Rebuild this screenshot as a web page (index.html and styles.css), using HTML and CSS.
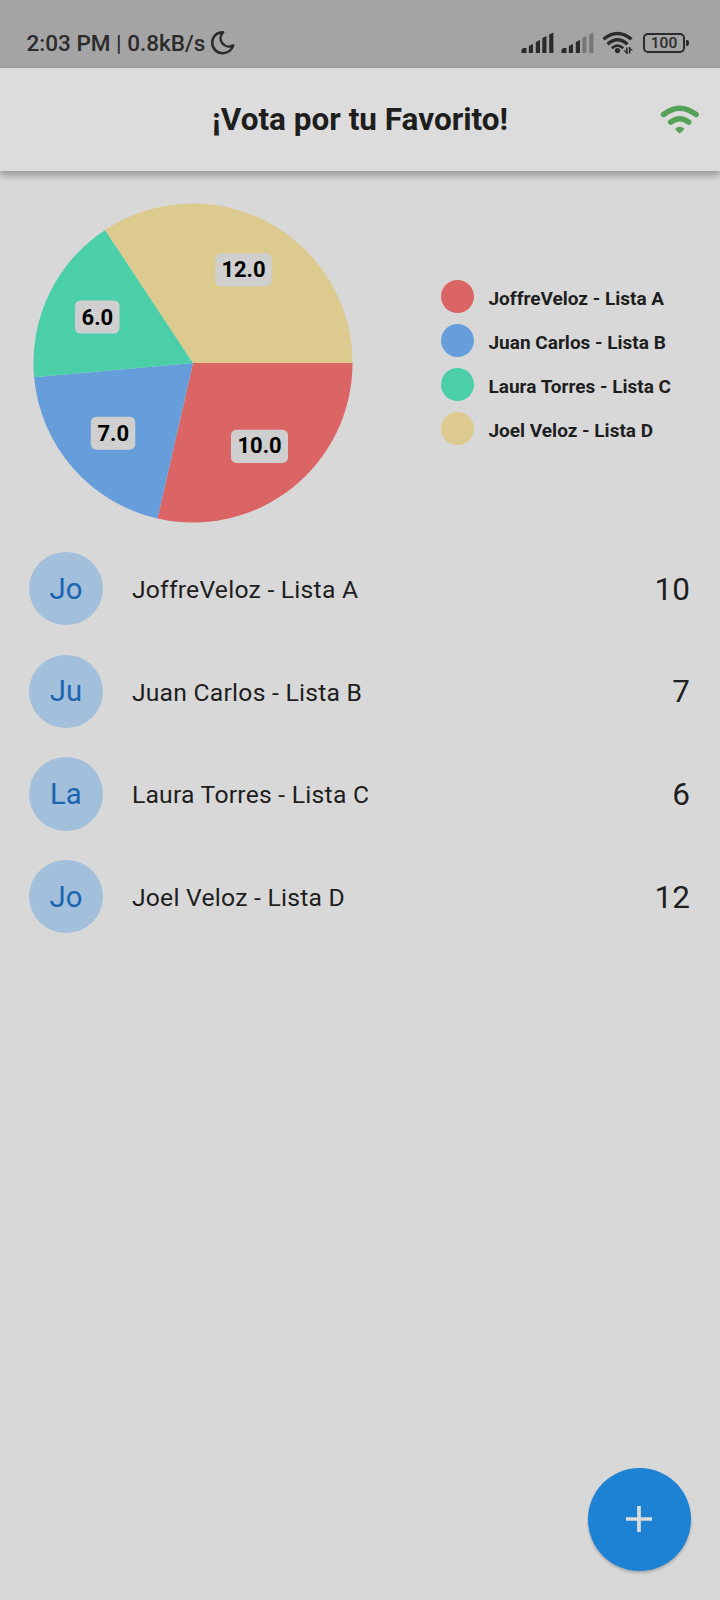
FILE: index.html
```html
<!DOCTYPE html>
<html lang="es">
<head>
<meta charset="utf-8">
<title>¡Vota por tu Favorito!</title>
<link rel="stylesheet" href="styles.css">
</head>
<body>
<div class="screen">
  <div class="status">
    <span class="status-text">2:03 PM | 0.8kB/s</span>
    <svg class="moon" width="26" height="26" viewBox="0 0 26 26"><path d="M13.200 2.200C6.800 2 2.200 6.700 2.200 12.800C2.200 18.800 7 23.200 12.700 23.200C17.600 23.200 21.900 20.200 23.300 15.400C19.400 17.300 14.800 16.600 12.300 13.300C9.600 9.700 10.200 5.300 13.200 2.200Z" fill="none" stroke="#2b2b2b" stroke-width="2.500" stroke-linejoin="round"/></svg>
    <div class="status-icons">
      <svg class="signal" width="33" height="22" viewBox="0 0 33 22" fill="#2b2b2b"><path d="M.5 21v-2.500a2.500 2.500 0 0 1 2.500-2.500h2.500v5z"/><path d="M7.800 21v-7l4.200-2v9z"/><path d="M14.800 21V10l4.200-2v13z"/><path d="M21.300 21V6l4.200-2v17z"/><path d="M28.200 21V2.500l4.200-2V21z"/></svg>
      <svg class="signal" width="33" height="22" viewBox="0 0 33 22" fill="#2b2b2b"><path d="M.5 21v-2.500a2.500 2.500 0 0 1 2.500-2.500h2.500v5z"/><path d="M7.800 21v-7l4.200-2v9z"/><path d="M14.800 21V10l4.200-2v13z"/><path d="M21.300 21V6l4.200-2v17z" fill="#777"/><path d="M28.200 21V2.500l4.200-2V21z" fill="#777"/></svg>
      <svg class="net" width="32" height="24" viewBox="0 0 32 24" fill="none" stroke="#2b2b2b" stroke-width="3.400"><path d="M1.500 8.300Q15.500-3.500 29.500 8.300"/><path d="M5.600 13.200Q15.500 4.300 25.400 13.200"/><path d="M9.800 17.200Q15.500 12 21.200 17.200" stroke-width="2.800"/><circle cx="15.500" cy="19.600" r="2.700" fill="#2b2b2b" stroke="none"/><path d="M25.200 16v7l-4-3.600h4M27.200 23v-7l3.800 3.600h-3.800" fill="#2b2b2b" stroke="none"/><path d="M24.800 16.500v6.500M27.600 16v6.500" stroke-width="1.600"/></svg>
      <div class="battery"><span>100</span></div><i class="battery-tip"></i>
    </div>
  </div>
  <header class="appbar">
    <h1>¡Vota por tu Favorito!</h1>
    <svg class="wifi" width="40" height="30" viewBox="0 0 40 30" fill="none" stroke="#55a158" stroke-width="5.400" stroke-linecap="round"><path d="M3.500 9.500Q19.700-3.100 36.100 9.500"/><path d="M10.700 17.200Q19.700 10.300 28.800 17.200" stroke-width="5.400"/><path d="M15.200 23.500Q19.700 20.200 24.300 23.500Q24.600 24.700 19.700 28.400Q14.800 24.700 15.200 23.500Z" fill="#55a158" stroke="none"/></svg>
  </header>
  <section class="results">
    <svg class="pie" width="320" height="320" viewBox="-160 -160 320 320">
      <path d="M0 0H159.500A159.500 159.500 0 0 1-35.500 155.500Z" fill="#db6464"/>
      <path d="M0 0L-35.500 155.500A159.500 159.500 0 0 1-158.900 14.300Z" fill="#659edb"/>
      <path d="M0 0L-158.900 14.300A159.500 159.500 0 0 1-87.900-133.100Z" fill="#4acfa9"/>
      <path d="M0 0L-87.900-133.100A159.500 159.500 0 0 1 159.500 0Z" fill="#dcca8f"/>
      <g fill="#cfcfcf"><rect x="22.300" y="-109.700" width="56.500" height="33" rx="5.500"/><rect x="-118" y="-62.500" width="44.500" height="33" rx="5.500"/><rect x="-102.200" y="53.700" width="44.500" height="33" rx="5.500"/><rect x="38" y="66.700" width="57" height="33.200" rx="5.500"/></g>
      <g class="pie-label"><text x="50.500" y="-86">12.0</text><text x="-95.600" y="-38.500">6.0</text><text x="-79.800" y="77.500">7.0</text><text x="66.600" y="90">10.0</text></g>
    </svg>
    <ul class="legend">
      <li><i class="dot red"></i><span>JoffreVeloz - Lista A</span></li>
      <li><i class="dot blue"></i><span>Juan Carlos - Lista B</span></li>
      <li><i class="dot green"></i><span>Laura Torres - Lista C</span></li>
      <li><i class="dot yellow"></i><span>Joel Veloz - Lista D</span></li>
    </ul>
  </section>
  <ul class="bands">
    <li><span class="avatar">Jo</span><span class="name">JoffreVeloz - Lista A</span><span class="votes">10</span></li>
    <li><span class="avatar">Ju</span><span class="name">Juan Carlos - Lista B</span><span class="votes">7</span></li>
    <li><span class="avatar">La</span><span class="name">Laura Torres - Lista C</span><span class="votes">6</span></li>
    <li><span class="avatar">Jo</span><span class="name">Joel Veloz - Lista D</span><span class="votes">12</span></li>
  </ul>
  <button class="fab" aria-label="Agregar"><svg width="26" height="26" viewBox="0 0 26 26"><path d="M13 0V26M0 13H26" stroke="#dcdcdc" stroke-width="3.700"/></svg></button>
</div>
</body>
</html>
```
FILE: styles.css
```css
* { box-sizing: border-box; }
body { margin: 0; font-family: Roboto, "Liberation Sans", sans-serif; color: #1e1e1e; background: #d8d8d8; }
ul { margin: 0; padding: 0; list-style: none; }
.screen { position: relative; width: 720px; height: 1600px; overflow: hidden; }
.status { height: 68px; background: #a4a4a4; display: flex; align-items: center; padding: 18px 31px 0 26.500px; color: #2b2b2b; }
.status-text { font-size: 22.500px; font-weight: 500; line-height: 26px; white-space: nowrap; }
.moon { margin-left: 4.500px; }
.status-icons { margin-left: auto; display: flex; align-items: center; }
.signal { margin-right: 7px; }
.net { margin: 0 9px 0 1px; }
.battery { width: 42px; height: 20px; border: 2.500px solid #2b2b2b; border-radius: 5px; display: flex; align-items: center; justify-content: center; font-size: 15.500px; font-weight: 500; line-height: 15px; }
.battery span { padding-top: 1px; }
.battery-tip { width: 3px; height: 6px; margin-left: 1px; border-radius: 0 2px 2px 0; background: #2b2b2b; }
.appbar { position: relative; height: 102.700px; background: #dcdcdc; box-shadow: 0 4px 8px rgba(0, 0, 0, .32); display: grid; grid-template-columns: 60px 1fr 60px; align-items: center; }
.wifi { margin-top: 2px; }
h1 { grid-column: 2; margin: 0; padding-top: 1px; text-align: center; font-size: 31.500px; font-weight: 700; line-height: 36px; white-space: nowrap; }
.results { height: 366.600px; padding: 32.300px 0 0 33px; display: flex; }
.legend { margin: 77.500px 0 0 87.500px; display: grid; grid-auto-rows: 44px; align-content: start; }
.legend li { display: flex; align-items: center; font-size: 19px; font-weight: 700; height: 33px; white-space: nowrap; }
.dot { width: 33px; height: 33px; border-radius: 50%; margin-right: 15px; }
.legend span { padding-top: 2.500px; }
.red { background: #db6464; }
.blue { background: #659edb; }
.green { background: #4acfa9; }
.yellow { background: #dcca8f; }
.pie-label { font-size: 22px; font-weight: 700; text-anchor: middle; fill: #000; }
.bands li { height: 102.670px; padding: 0 30px 0 29.300px; display: flex; align-items: center; }
.avatar { width: 73.300px; height: 73.300px; border-radius: 50%; background: #a2bfdb; color: #1b65b0; font-size: 29.300px; display: flex; align-items: center; justify-content: center; margin-right: 29.300px; }
.name { font-size: 24.700px; letter-spacing: .24px; padding-top: 1.500px; }
.votes { margin-left: auto; padding-top: 1px; font-size: 31.500px; }
.fab { position: absolute; right: 29.300px; bottom: 29.300px; width: 102.700px; height: 102.700px; padding: 0; border: 0; border-radius: 50%; background: #1d82d4; box-shadow: 0 2px 3px rgba(0, 0, 0, .22); display: flex; align-items: center; justify-content: center; }
```
